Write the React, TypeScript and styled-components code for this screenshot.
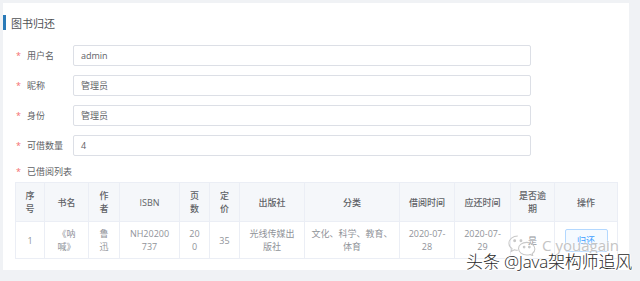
import React from "react";
import styled, { createGlobalStyle } from "styled-components";

const GlobalStyle = createGlobalStyle`
  html, body {
    margin: 0;
    padding: 0;
    background: #f0f2f5;
  }
  body {
    font-family: "Open Sans", "Noto Sans CJK SC", sans-serif;
    -webkit-font-smoothing: antialiased;
  }
`;

const Page = styled.div`
  position: relative;
  width: 640px;
  height: 281px;
  box-sizing: border-box;
  padding: 3px 11px 11px 3px;
  overflow: hidden;
`;

const Panel = styled.div`
  background: #ffffff;
  height: 100%;
  box-sizing: border-box;
  padding: 12px 12px 12px 0;
  display: flex;
  flex-direction: column;
`;

const Title = styled.div`
  border-left: 3px solid #2a7ab8;
  height: 15px;
  padding-left: 5px;
  display: flex;
  align-items: center;
  font-size: 11px;
  color: #505255;
`;

const Form = styled.div`
  margin-top: 15px;
  padding-left: 13px;
  display: flex;
  flex-direction: column;
  gap: 9px;
`;

const Row = styled.div`
  display: flex;
  align-items: center;
`;

const Label = styled.div`
  width: 57px;
  display: flex;
  align-items: center;
  font-size: 9px;
  color: #606266;
`;

const Star = styled.span`
  color: #f56c6c;
  font-size: 9px;
  width: 11px;
`;

const Input = styled.div`
  width: 458px;
  height: 21px;
  box-sizing: border-box;
  border: 1px solid #dcdfe6;
  border-radius: 2px;
  padding-left: 7px;
  display: flex;
  align-items: center;
  font-size: 9px;
  color: #606266;
`;

const ListLabel = styled(Label)`
  margin-top: 9px;
  margin-left: 13px;
  width: auto;
  height: 12px;
`;

const Table = styled.table`
  margin: 5px 0 0 12px;
  width: 602px;
  border-collapse: collapse;
  table-layout: fixed;
  font-size: 9px;
  line-height: 13px;
  border: 1px solid #ebeef5;
`;

const Th = styled.th<{ $pad?: number }>`
  height: 39px;
  box-sizing: border-box;
  padding: 0 ${(p) => p.$pad ?? 8}px;
  background: #f5f7fa;
  color: #606266;
  font-weight: 500;
  text-align: center;
  word-break: break-all;
  border: 1px solid #ebeef5;
`;

const Td = styled.td<{ $pad?: number }>`
  height: 37px;
  box-sizing: border-box;
  padding: 0 ${(p) => p.$pad ?? 8}px;
  color: #909399;
  text-align: center;
  word-break: break-all;
  border: 1px solid #ebeef5;
`;

const ReturnButton = styled.button`
  width: 43px;
  height: 23px;
  border: 1px solid #b3d8ff;
  border-radius: 2px;
  background: #f5faff;
  color: #409eff;
  font-family: inherit;
  font-size: 9px;
  padding: 0;
`;

const Watermark = styled.div`
  position: absolute;
  right: 8px;
  bottom: 8px;
  display: flex;
  flex-direction: column;
  align-items: flex-end;
  pointer-events: none;
`;

const Signature = styled.div`
  display: flex;
  align-items: center;
  gap: 5px;
  margin-right: 13px;
  margin-bottom: -8px;
  font-size: 15px;
  color: #c4c4c4;
  text-shadow: 0 0 2px #fff, 0 0 2px #fff;
`;

const Caption = styled.div`
  font-size: 17px;
  font-weight: 300;
  color: #2a2a2a;
  letter-spacing: -0.2px;
  text-shadow: 1px 0 0 #fff, -1px 0 0 #fff, 0 1px 0 #fff, 0 -1px 0 #fff;
`;

const columns = [
  { title: "序号", width: 29 },
  { title: "书名", width: 44 },
  { title: "作者", width: 31 },
  { title: "ISBN", width: 60 },
  { title: "页数", width: 30 },
  { title: "定价", width: 30 },
  { title: "出版社", width: 65 },
  { title: "分类", width: 95, pad: 4 },
  { title: "借阅时间", width: 55 },
  { title: "应还时间", width: 56 },
  { title: "是否逾期", width: 44 },
  { title: "操作", width: 63 },
];

const row = ["1", "《呐喊》", "鲁迅", "NH20200737", "200", "35", "光线传媒出版社", "文化、科学、教育、体育", "2020-07-28", "2020-07-29", "是"];

const fields = [
  { label: "用户名", value: "admin" },
  { label: "昵称", value: "管理员" },
  { label: "身份", value: "管理员" },
  { label: "可借数量", value: "4" },
];

const BubbleLogo = () => (
  <svg width="30" height="22" viewBox="0 0 28 21" fill="none" stroke="#c8c8c8" strokeWidth="1">
    <path d="M10 2c-4.7 0-8.5 3-8.5 6.8 0 2.1 1.2 4 3 5.2l-.8 2.6 3-1.6c1 .3 2.1.5 3.3.5" />
    <path d="M18.5 8c4.3 0 7.8 2.8 7.8 6.2 0 1.9-1 3.5-2.6 4.6l.6 2-2.5-1.3c-1 .3-2.1.5-3.3.5-4.3 0-7.8-2.8-7.8-6.2S14.2 8 18.5 8z" />
    <circle cx="7" cy="6.5" r="0.9" fill="#c8c8c8" />
    <circle cx="13" cy="6.5" r="0.9" fill="#c8c8c8" />
    <circle cx="16" cy="12.5" r="0.8" fill="#c8c8c8" />
    <circle cx="21" cy="12.5" r="0.8" fill="#c8c8c8" />
  </svg>
);

export default function App() {
  return (
    <>
      <GlobalStyle />
      <Page>
        <Panel>
          <Title>图书归还</Title>
          <Form>
            {fields.map((f) => (
              <Row key={f.label}>
                <Label>
                  <Star>*</Star>
                  {f.label}
                </Label>
                <Input>{f.value}</Input>
              </Row>
            ))}
          </Form>
          <ListLabel>
            <Star>*</Star>
            已借阅列表
          </ListLabel>
          <Table>
            <colgroup>
              {columns.map((c) => (
                <col key={c.title} style={{ width: c.width }} />
              ))}
            </colgroup>
            <thead>
              <tr>
                {columns.map((c) => (
                  <Th key={c.title} $pad={c.pad}>
                    {c.title}
                  </Th>
                ))}
              </tr>
            </thead>
            <tbody>
              <tr>
                {row.map((v, i) => (
                  <Td key={i} $pad={columns[i].pad}>
                    {v}
                  </Td>
                ))}
                <Td>
                  <ReturnButton>归还</ReturnButton>
                </Td>
              </tr>
            </tbody>
          </Table>
        </Panel>
        <Watermark>
          <Signature>
            <BubbleLogo />C youagain
          </Signature>
          <Caption>头条 @Java架构师追风</Caption>
        </Watermark>
      </Page>
    </>
  );
}
